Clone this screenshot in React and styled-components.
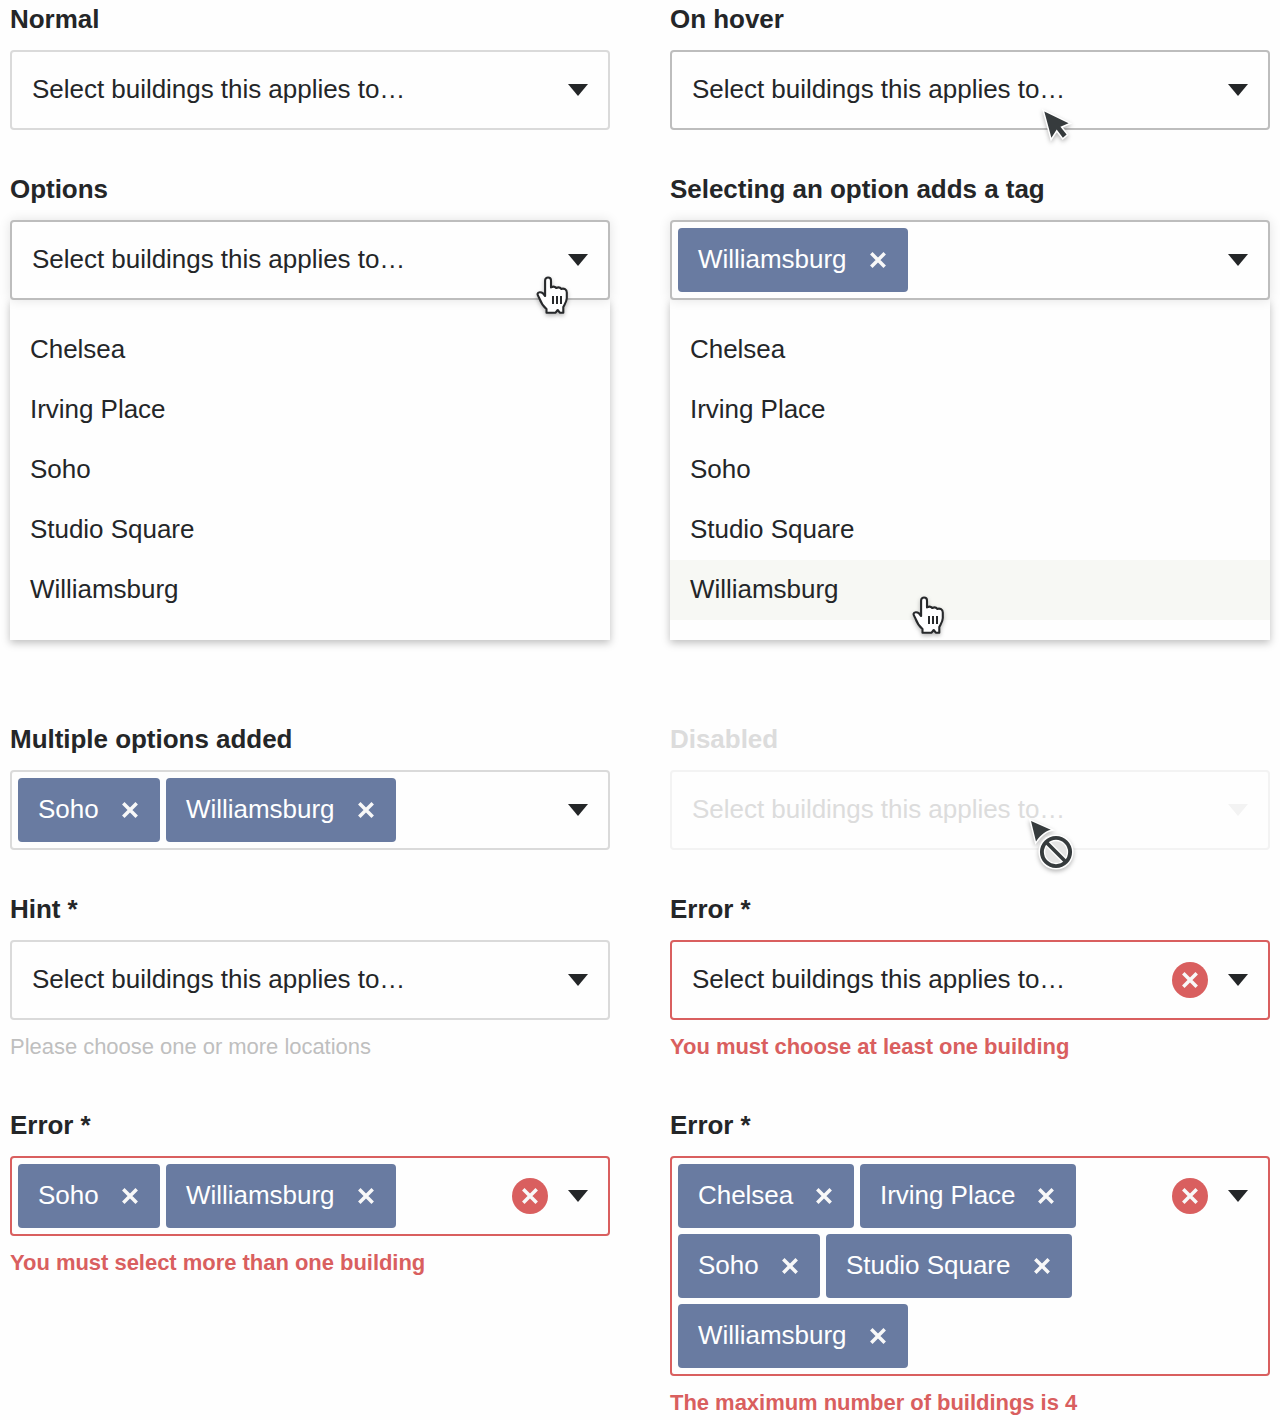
import React from "react";
import styled, { createGlobalStyle, css } from "styled-components";

const colors = {
  page: "#fefefe",
  text: "#242628",
  label: "#242628",
  border: "#dadada",
  borderActive: "#bdbdbd",
  error: "#d95f5f",
  tag: "#697ba1",
  hint: "#bfbfbf",
  disabled: "#dcdcdc",
  disabledLine: "#f3f3f3",
  hover: "#f7f8f4",
};

const GlobalStyle = createGlobalStyle`
  *, *::before, *::after { box-sizing: border-box; }
  body {
    margin: 0;
    background: ${colors.page};
    color: ${colors.text};
    font-family: "Liberation Sans", Arial, Helvetica, sans-serif;
    font-size: 26px;
    letter-spacing: -0.03px;
  }
`;

const Page = styled.main`
  display: grid;
  grid-template-columns: 600px 600px;
  grid-template-rows: 170px 550px 170px 216px auto;
  column-gap: 60px;
  width: 1280px;
  height: 1420px;
  padding: 0 10px;
  overflow: hidden;
`;

const Field = styled.section`
  position: relative;
  display: flex;
  flex-direction: column;
`;

const Label = styled.h2`
  margin: 0;
  height: 50px;
  font-size: 26px;
  font-weight: 700;
  line-height: 38px;
  color: ${(p) => (p.$state === "disabled" ? colors.disabled : colors.label)};
`;

const borderFor = {
  normal: colors.border,
  hover: colors.borderActive,
  open: colors.borderActive,
  error: colors.error,
  disabled: colors.disabledLine,
};

const Control = styled.div`
  display: flex;
  align-items: flex-start;
  flex: none;
  min-height: 80px;
  padding: 6px 20px 6px 6px;
  background: ${colors.page};
  border: 2px solid ${(p) => borderFor[p.$state]};
  border-radius: 4px;
  ${(p) =>
    p.$state === "open" &&
    css`
      position: relative;
      z-index: 1;
      box-shadow: 0 0 12px rgba(0, 0, 0, 0.11);
    `}
`;

const Placeholder = styled.span`
  flex: 1;
  padding-left: 14px;
  line-height: 63px;
  color: ${(p) => (p.$state === "disabled" ? colors.disabled : colors.text)};
`;

const Tags = styled.div`
  display: flex;
  flex: 1;
  flex-wrap: wrap;
  gap: 6px;
`;

const Tag = styled.span`
  display: flex;
  align-items: center;
  justify-content: space-between;
  width: ${(p) => p.$width}px;
  height: 64px;
  padding: 0 22px 0 20px;
  border-radius: 4px;
  background: ${colors.tag};
  color: #fff;
  line-height: 63px;
  white-space: nowrap;
`;

const TagText = styled.span`
  height: 64px;
`;

const Indicators = styled.div`
  display: flex;
  align-items: center;
  gap: 20px;
  height: 64px;
`;

const ErrorBadge = styled.span`
  display: flex;
  align-items: center;
  justify-content: center;
  width: 36px;
  height: 36px;
  border-radius: 50%;
  background: ${colors.error};
`;

const Menu = styled.ul`
  margin: 0;
  padding: 20px 0;
  list-style: none;
  background: ${colors.page};
  box-shadow: 0 3px 8px rgba(0, 0, 0, 0.25);
`;

const Option = styled.li`
  height: 60px;
  padding-left: 20px;
  line-height: 59px;
  background: ${(p) => (p.$active ? colors.hover : "transparent")};
`;

const Message = styled.p`
  margin: 0;
  font-size: 22px;
  line-height: 54px;
  font-weight: ${(p) => (p.$error ? 700 : 400)};
  color: ${(p) => (p.$error ? colors.error : colors.hint)};
`;

const CursorLayer = styled.svg`
  position: absolute;
  z-index: 2;
  left: ${(p) => p.$x}px;
  top: ${(p) => p.$y}px;
  overflow: visible;
  filter: drop-shadow(0 2px 2px rgba(0, 0, 0, 0.28));
`;

const Cross = () => (
  <svg width="16" height="16" viewBox="0 0 16 16">
    <path d="M1.3 1.3L14.7 14.7M14.7 1.3L1.3 14.7" stroke="#f8f8f8" strokeWidth="3.5" fill="none" />
  </svg>
);

const Caret = ({ disabled }) => (
  <svg width="20" height="12" viewBox="0 0 20 12">
    <path d="M0 0H20L10 12Z" fill={disabled ? colors.disabledLine : colors.text} />
  </svg>
);

const arrowShape = "M2.3 2.5L26.6 14.3L18.4 17.8L24.6 25.6L20.9 28.8L14.7 20.6L9.4 28.8Z";
const blockedArrowShape = "M2 2L21.8 10.8C17 12 12.5 15 7 22.4Z";

const ArrowCursor = ({ x, y }) => (
  <CursorLayer $x={x} $y={y} width="32" height="34" viewBox="0 0 32 34">
    <path d={arrowShape} fill="#fff" stroke="#fff" strokeWidth="3" />
    <path d={arrowShape} fill="#363b3d" />
  </CursorLayer>
);

const HandCursor = ({ x, y }) => (
  <CursorLayer $x={x} $y={y} width="34" height="40" viewBox="0 0 34 40">
    <path
      d="M9.1 20V4.5C9.1 .6 15 .6 15 4.5V11.4C16.8 10.4 19 10.5 20.2 12C22 11 24.2 11.4 25.2 12.9C28 12 30.8 13.4 30.8 16.6V22C30.8 25.6 28.6 28.4 27.3 31V36.7H23.8L21.7 34L19.6 36.7H10.5V33C6.8 29.8 4.8 26.3 3.5 22.6C2.4 20.3 1.5 19.1 1.5 18C2 15.7 5.1 15.8 7 17.4Z"
      fill="#fff"
      stroke="#27292b"
      strokeWidth="2.1"
      strokeLinejoin="round"
    />
    <path d="M17 20V28M21 20V28M25 20V28" stroke="#27292b" strokeWidth="2" />
  </CursorLayer>
);

const BlockedCursor = ({ x, y }) => (
  <CursorLayer $x={x} $y={y} width="44" height="50" viewBox="0 0 44 50">
    <path d={blockedArrowShape} fill="#fff" stroke="#fff" strokeWidth="3" />
    <path d={blockedArrowShape} fill="#363b3d" />
    <circle cx="27" cy="33" r="17.6" fill="#fff" />
    <circle cx="27" cy="33" r="10.8" fill="#e4e4e4" />
    <path d="M18 24L36 42" stroke="#fff" strokeWidth="6.4" />
    <circle cx="27" cy="33" r="14.1" fill="none" stroke="#363b3d" strokeWidth="3.9" />
    <path d="M17.5 23.5L36.5 42.5" stroke="#363b3d" strokeWidth="3.8" />
  </CursorLayer>
);

const buildings = ["Chelsea", "Irving Place", "Soho", "Studio Square", "Williamsburg"];

const tagWidths = {
  Chelsea: 176,
  "Irving Place": 216,
  Soho: 142,
  "Studio Square": 246,
  Williamsburg: 230,
};

function BuildingSelect({ label, state = "normal", tags = [], active, message, children }) {
  return (
    <Field>
      <Label $state={state}>{label}</Label>
      <Control $state={state}>
        {tags.length > 0 ? (
          <Tags>
            {tags.map((name) => (
              <Tag key={name} $width={tagWidths[name]}>
                <TagText>{name}</TagText>
                <Cross />
              </Tag>
            ))}
          </Tags>
        ) : (
          <Placeholder $state={state}>Select buildings this applies to…</Placeholder>
        )}
        <Indicators>
          {state === "error" && (
            <ErrorBadge>
              <Cross />
            </ErrorBadge>
          )}
          <Caret disabled={state === "disabled"} />
        </Indicators>
      </Control>
      {state === "open" && (
        <Menu>
          {buildings.map((name) => (
            <Option key={name} $active={name === active}>
              {name}
            </Option>
          ))}
        </Menu>
      )}
      {message && <Message $error={state === "error"}>{message}</Message>}
      {children}
    </Field>
  );
}

export default function App() {
  return (
    <>
      <GlobalStyle />
      <Page>
        <BuildingSelect label="Normal" />
        <BuildingSelect label="On hover" state="hover">
          <ArrowCursor x={372} y={109} />
        </BuildingSelect>
        <BuildingSelect label="Options" state="open">
          <HandCursor x={526} y={106} />
        </BuildingSelect>
        <BuildingSelect
          label="Selecting an option adds a tag"
          state="open"
          tags={["Williamsburg"]}
          active="Williamsburg"
        >
          <HandCursor x={242} y={426} />
        </BuildingSelect>
        <BuildingSelect label="Multiple options added" tags={["Soho", "Williamsburg"]} />
        <BuildingSelect label="Disabled" state="disabled">
          <BlockedCursor x={359} y={99} />
        </BuildingSelect>
        <BuildingSelect label="Hint *" message="Please choose one or more locations" />
        <BuildingSelect
          label="Error *"
          state="error"
          message="You must choose at least one building"
        />
        <BuildingSelect
          label="Error *"
          state="error"
          tags={["Soho", "Williamsburg"]}
          message="You must select more than one building"
        />
        <BuildingSelect
          label="Error *"
          state="error"
          tags={buildings}
          message="The maximum number of buildings is 4"
        />
      </Page>
    </>
  );
}
